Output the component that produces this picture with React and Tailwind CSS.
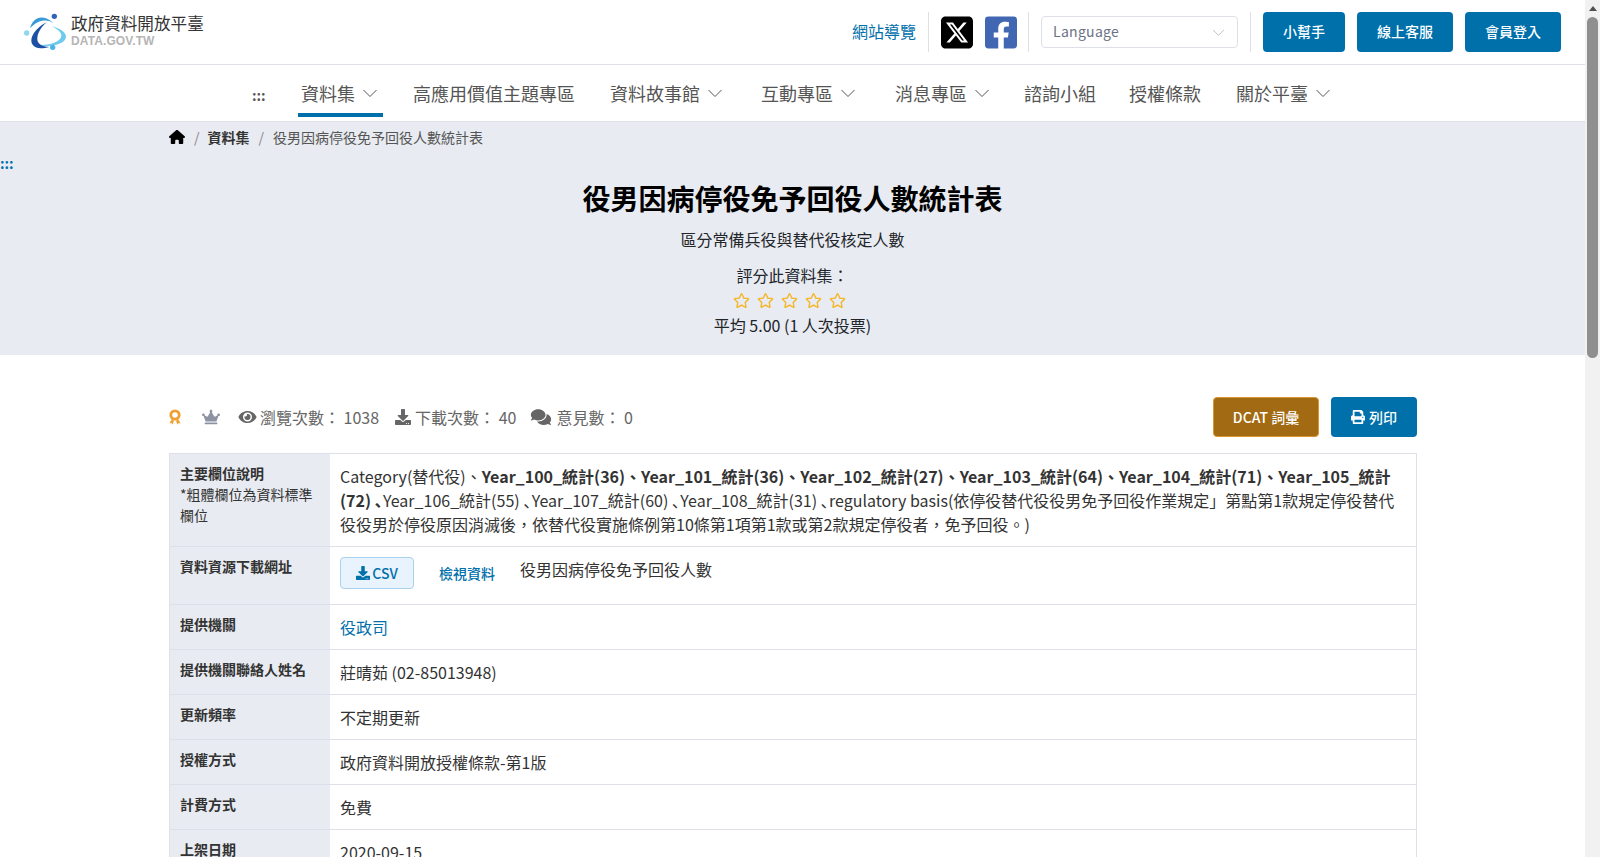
import React from "react";
import { FaEye, FaDownload, FaComments, FaCrown, FaPrint, FaRegStar, FaFacebookSquare } from "react-icons/fa";
import { FaSquareXTwitter, FaHouse } from "react-icons/fa6";

const Chev = ({ className }) => (
  <svg viewBox="0 0 16 16" className={className} fill="none" stroke="currentColor" strokeWidth="1">
    <path d="M1.5 5 L8 11.5 L14.5 5" />
  </svg>
);

const Logo = () => (
  <svg viewBox="0 0 150 138" className="w-[50px] h-[46px] shrink-0">
    <path d="M55 108 C90 118 140 105 138 82 C136 68 118 58 95 52 C115 62 126 72 124 82 C120 100 85 110 55 108 Z" fill="#6ecbee" />
    <path d="M30 58 C38 25 68 12 100 42 C78 28 52 34 30 58 Z" fill="#3a9ad9" />
    <path d="M80 40 C50 55 26 85 37 106 C45 121 66 120 88 114 C66 112 50 105 52 86 C54 68 66 52 80 40 Z" fill="#1d4fa3" />
    <circle cx="103" cy="22" r="8" fill="#2f62b8" />
    <circle cx="20" cy="72" r="8" fill="#8fd6f2" />
    <circle cx="98" cy="115" r="8" fill="#4ab4e6" />
  </svg>
);

const Medal = () => (
  <svg viewBox="0 0 12 16" className="w-[12px] h-[16px]">
    <circle cx="6" cy="6" r="4.2" fill="none" stroke="#f0a030" strokeWidth="2.8" />
    <path d="M2.6 10.5 L5 11.8 L3.5 15.8 L2.6 14 L0.4 14.4 Z M9.4 10.5 L7 11.8 L8.5 15.8 L9.4 14 L11.6 14.4 Z" fill="#f0a030" />
  </svg>
);

const NavItem = ({ children, chev, active, className = "" }) => (
  <div className={`flex items-center h-[42px] px-[3px] pb-[2px] border-b-4 mt-[10px] ${active ? "border-[#0070ab]" : "border-transparent"} ${className}`}>
    <span>{children}</span>
    {chev && <Chev className="w-[16px] h-[16px] ml-[7px] mr-[2px] text-[#555]" />}
  </div>
);

const Row = ({ label, note, children }) => (
  <div className="flex border-b border-[#dde0e8]">
    <div className="w-[160px] shrink-0 bg-[#e8ebf1] px-[10px] pt-[9px] pb-[11px] text-[14px] leading-[21px] text-[#333]">
      <div className="font-bold">{label}</div>
      {note && <div>{note}</div>}
    </div>
    <div className="flex-1 px-[10px] py-[10px] text-[16px] leading-[24px] text-[#333]">{children}</div>
  </div>
);

const B = ({ children }) => <b className="font-bold">{children}</b>;

export default function App() {
  return (
    <div className="flex h-screen overflow-hidden bg-white text-[#212529] font-['Noto_Sans_CJK_TC','Noto_Sans',sans-serif]">
      <div className="flex-1 min-w-0 overflow-hidden">
        <header className="h-[65px] border-b border-[#dde0e8] flex items-center justify-between pl-[20px] pr-[24px]">
          <div className="flex items-center gap-[1px]">
            <Logo />
            <div className="flex flex-col mt-[-3px]">
              <span className="text-[16.6px] leading-[20px] text-[#333]">政府資料開放平臺</span>
              <span className="text-[12px] leading-[15px] mt-[1px] font-bold text-[#b5b5b5] font-['Liberation_Sans',sans-serif] tracking-[0.1px]">DATA.GOV.TW</span>
            </div>
          </div>
          <div className="flex items-center h-[40px]">
            <span className="text-[16px] text-[#0070ab] mr-[12px] pb-[2px]">網站導覽</span>
            <div className="w-px h-[40px] bg-[#dde0e8]" />
            <div className="flex items-center gap-[12px] pl-[12px] pr-[11px]">
              <FaSquareXTwitter className="w-[32px] h-[37px] text-black" />
              <FaFacebookSquare className="w-[32px] h-[37px] text-[#4267b2]" />
            </div>
            <div className="w-px h-[40px] bg-[#dde0e8]" />
            <div className="ml-[12px] w-[197px] h-[32px] border border-[#dde0e8] rounded-[4px] flex items-center justify-between pl-[11px] pr-[12px] text-[14px] text-[#6c7285]">
              <span className="tracking-[0.3px] pb-[2px]">Language</span>
              <Chev className="w-[13px] h-[13px] text-[#b0b4c0]" />
            </div>
            <div className="w-px h-[40px] bg-[#dde0e8] ml-[12px]" />
            <div className="flex gap-[12px] ml-[12px]">
              {[["小幫手", "w-[82px]"], ["線上客服", "w-[96px]"], ["會員登入", "w-[96px]"]].map(([t, w]) => (
                <div key={t} className={`${w} h-[40px] pb-[2px] rounded-[4px] bg-[#0070ab] text-white text-[14px] font-medium flex items-center justify-center`}>{t}</div>
              ))}
            </div>
          </div>
        </header>

        <nav className="h-[57px] border-b border-[#dde0e8] flex items-start pl-[252px] text-[18px] text-[#555]">
          <NavItem className="mr-[32px] w-[14px] !px-0"><span className="text-[14px] font-bold">:::</span></NavItem>
          <NavItem chev active className="mr-[27px]">資料集</NavItem>
          <NavItem className="mr-[29px]">高應用價值主題專區</NavItem>
          <NavItem chev className="mr-[30px]">資料故事館</NavItem>
          <NavItem chev className="mr-[31px]">互動專區</NavItem>
          <NavItem chev className="mr-[26px]">消息專區</NavItem>
          <NavItem className="mr-[27px]">諮詢小組</NavItem>
          <NavItem className="mr-[29px]">授權條款</NavItem>
          <NavItem chev>關於平臺</NavItem>
        </nav>

        <section className="h-[233px] bg-[#e8ebf1]">
          <div className="pl-[169px] h-[30px] flex items-center text-[14px] text-[#555]">
            <FaHouse className="w-[16px] h-[16px] text-black" />
            <span className="ml-[9px] mr-[8px] text-[#888]">/</span>
            <span className="font-bold text-[#333]">資料集</span>
            <span className="ml-[9px] mr-[9px] text-[#888]">/</span>
            <span>役男因病停役免予回役人數統計表</span>
          </div>
          <div className="mt-[4px] text-[#0070ab] text-[14px] leading-[14px] font-bold h-[14px]">:::</div>
          <h1 className="mt-[10px] text-center text-[28px] leading-[36px] font-bold text-black">役男因病停役免予回役人數統計表</h1>
          <p className="mt-[11px] text-center text-[16px] leading-[24px] text-[#212529]">區分常備兵役與替代役核定人數</p>
          <p className="mt-[12px] text-center text-[16px] leading-[24px] text-[#212529]">評分此資料集：</p>
          <div className="flex justify-center gap-[7px] h-[26px] items-center pr-[6px]">
            {[0, 1, 2, 3, 4].map((i) => <FaRegStar key={i} className="w-[17px] h-[17px] text-[#f4b82e]" />)}
          </div>
          <p className="text-center text-[16px] leading-[24px] text-[#212529]">平均 5.00 (1 人次投票)</p>
        </section>

        <div className="ml-[169px] mr-[168px] mt-[42px]">
          <div className="flex items-center justify-between h-[40px] text-[16px] text-[#666]">
            <div className="flex items-center">
              <Medal />
              <FaCrown className="w-[18px] h-[16px] text-[#8e93a3] ml-[21px]" />
              <FaEye className="w-[19px] h-[16px] text-[#666] ml-[18px] mr-[3px]" />
              <span>瀏覽次數： 1038</span>
              <FaDownload className="w-[16px] h-[16px] text-[#666] ml-[16px] mr-[4px]" />
              <span>下載次數： 40</span>
              <FaComments className="w-[22px] h-[18px] text-[#666] ml-[14px] mr-[4px]" />
              <span>意見數： 0</span>
            </div>
            <div className="flex gap-[12px] text-[14px] font-medium text-white">
              <div className="w-[106px] h-[40px] rounded-[4px] bg-[#a16a13] border border-[#d9962f] flex items-center justify-center">DCAT 詞彙</div>
              <div className="w-[86px] h-[40px] rounded-[4px] bg-[#0070ab] flex items-center justify-center gap-[4px]"><FaPrint className="w-[14px] h-[14px]" />列印</div>
            </div>
          </div>

          <div className="mt-[16px] border border-b-0 border-[#dde0e8]">
            <Row label="主要欄位說明" note="*粗體欄位為資料標準欄位">
              Category(替代役)、<B>{"Year_100_統計(36)、Year_101_統計(36)、Year_102_統計(27)、Year_103_統計(64)、Year_104_統計(71)、Year_105_統計(72)\u2005､"}</B>{"Year_106_統計(55)\u2005､Year_107_統計(60)\u2005､Year_108_統計(31)\u2005､regulatory basis(依停役替代役役男免予回役作業規定」第點第1款規定停役替代役役男於停役原因消滅後，依替代役實施條例第10條第1項第1款或第2款規定停役者，免予回役。)"}
            </Row>
            <Row label="資料資源下載網址">
              <div className="flex items-start h-[37px]">
                <div className="w-[74px] h-[32px] rounded-[4px] bg-[#e8f3fd] border border-[#a8d2f0] flex items-center justify-center gap-[2px] text-[14px] font-medium text-[#0070ab]">
                  <FaDownload className="w-[14px] h-[14px]" />CSV
                </div>
                <span className="ml-[25px] mt-[4px] text-[14px] font-medium text-[#0070ab]">檢視資料</span>
                <span className="ml-[25px]">役男因病停役免予回役人數</span>
              </div>
            </Row>
            <Row label="提供機關"><span className="text-[#0070ab]">役政司</span></Row>
            <Row label="提供機關聯絡人姓名">莊晴茹 (02-85013948)</Row>
            <Row label="更新頻率">不定期更新</Row>
            <Row label="授權方式">政府資料開放授權條款-第1版</Row>
            <Row label="計費方式">免費</Row>
            <Row label="上架日期">2020-09-15</Row>
          </div>
        </div>
      </div>
      <div className="w-[15px] shrink-0 bg-[#f1f1f1] flex flex-col items-center">
        <div className="h-[17px] w-full flex items-center justify-center">
          <div className="w-0 h-0 border-x-[4px] border-x-transparent border-b-[5px] border-b-[#505050]" />
        </div>
        <div className="w-[11px] h-[341px] rounded-[6px] bg-[#8f8f8f]" />
      </div>
    </div>
  );
}
